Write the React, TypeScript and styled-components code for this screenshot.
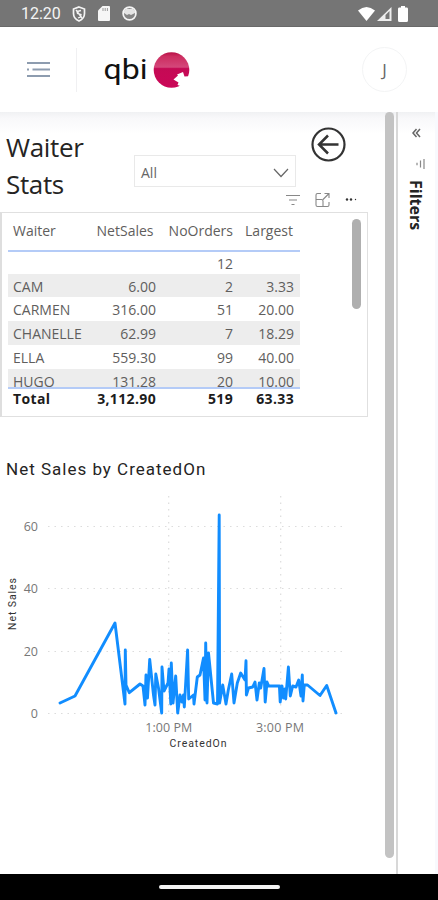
import React from 'react';
import styled, { createGlobalStyle } from 'styled-components';

const Global = createGlobalStyle`
  * { box-sizing: border-box; }
  body { margin: 0; background: #fff; font-family: "Open Sans", "Noto Sans", sans-serif; }
`;

const Screen = styled.div`
  width: 438px;
  height: 900px;
  display: flex;
  flex-direction: column;
  overflow: hidden;
  background: #fff;
`;

const StatusBar = styled.div`
  height: 27px;
  flex: none;
  display: flex;
  align-items: center;
  justify-content: space-between;
  padding: 1px 29px 0 21px;
  background: #757575;
  border-bottom: 1px solid #696969;
  color: #f4f4f4;
`;

const StatusGroup = styled.div<{ $gap: number }>`
  display: flex;
  align-items: center;
  gap: ${p => p.$gap}px;
`;

const Clock = styled.span`
  width: 40px;
  margin-right: -1px;
  padding-top: 1px;
  font: 400 16px/20px Roboto, sans-serif;
`;

const Header = styled.header`
  height: 85px;
  flex: none;
  display: flex;
  align-items: center;
  padding: 0 31px 0 27px;
`;

const HeaderRule = styled.div`
  width: 1px;
  height: 44px;
  margin-left: 26px;
  background: #f0f0f2;
`;

const Logo = styled.svg`
  margin-left: 27px;
`;

const Avatar = styled.div`
  width: 45px;
  height: 45px;
  margin-left: auto;
  border: 1px solid #f3f4f5;
  border-radius: 50%;
  display: flex;
  align-items: center;
  justify-content: center;
  font-size: 17px;
  color: #666;
`;

const Body = styled.div`
  flex: 1;
  min-height: 0;
  display: flex;
  background: linear-gradient(#f0f1f3 0, #f8f8fa 6px, #fff 22px);
`;

const Report = styled.main`
  width: 385px;
  flex: none;
  display: flex;
  flex-direction: column;
`;

const PageScroll = styled.div`
  width: 9px;
  height: 746px;
  border-radius: 5px;
  background: #c3c3c3;
`;

const FilterPane = styled.aside`
  width: 42px;
  margin-left: 2px;
  border-left: 2px solid #d8d8d8;
  border-right: 3px solid #f8f9fd;
  display: flex;
  flex-direction: column;
  align-items: center;
  padding-top: 16px;
`;

const FilterGlyph = styled.svg`
  margin: 21px 0 0 6px;
`;

const FilterLabel = styled.div`
  margin: 11px 0 0 -1px;
  writing-mode: vertical-rl;
  font-size: 16px;
  line-height: 20px;
  font-weight: 700;
  color: #242424;
`;

const TopRow = styled.div`
  height: 76px;
  display: flex;
`;

const Title = styled.h1`
  width: 127px;
  margin: 0;
  padding: 17px 30px 0 6px;
  font-size: 26px;
  line-height: 36.5px;
  font-weight: 400;
  letter-spacing: -0.35px;
  color: #252423;
`;

const Select = styled.div`
  width: 162px;
  height: 32px;
  margin: 43px 0 0 7px;
  padding: 3px 6px 0 6px;
  border: 1px solid #e9e9e9;
  display: flex;
  align-items: center;
  justify-content: space-between;
  font-size: 14px;
  color: #666;
`;

const BackButton = styled.svg`
  margin: 15px 0 0 15px;
`;

const Tools = styled.div`
  height: 24px;
  display: flex;
  justify-content: flex-end;
  align-items: center;
  gap: 14px;
  padding: 0 27px 0 0;
`;

const TableVisual = styled.section`
  width: 368px;
  height: 205px;
  border: 1px solid #e0e0e0;
  border-left: 2px solid #dedede;
  display: flex;
  justify-content: space-between;
  padding: 0 6px 0 6px;
`;

const Grid = styled.div`
  width: 292px;
  font-size: 14px;
`;

const Row = styled.div<{ $kind: 'head' | 'plain' | 'shade' | 'total' }>`
  display: grid;
  grid-template-columns: 67px 76px 77px 61px;
  padding-left: 5px;
  text-align: right;
  height: ${p => (p.$kind === 'head' ? 39 : p.$kind === 'total' ? 25 : 23.8)}px;
  line-height: ${p => (p.$kind === 'head' ? 35 : p.$kind === 'total' ? 20 : 25)}px;
  border-bottom: ${p => (p.$kind === 'head' ? '2px solid #b4cbf7' : 'none')};
  background: ${p => (p.$kind === 'shade' ? '#ededed' : 'transparent')};
  color: ${p => (p.$kind === 'total' ? '#1c1c1c' : '#5f5e5d')};
  font-weight: ${p => (p.$kind === 'total' ? 700 : 400)};
  letter-spacing: ${p => (p.$kind === 'total' ? 0.35 : 0)}px;
  white-space: nowrap;
  & > :first-child { text-align: left; }
`;

const HeadCell = styled.span<{ $shift?: number }>`
  padding-right: ${p => p.$shift ?? 0}px;
`;

const Rows = styled.div`
  height: 137px;
  overflow: hidden;
  border-bottom: 2px solid #b4cbf7;
  & > :first-child { height: 21.5px; line-height: 23px; }
`;

const TableScroll = styled.div`
  width: 9px;
  height: 90px;
  margin-top: 6px;
  border-radius: 5px;
  background: #afafaf;
`;

const ChartTitle = styled.h2`
  height: 24px;
  margin: 40px 0 0 6px;
  font: 400 17px/24px Roboto, sans-serif;
  letter-spacing: 1px;
  color: #252423;
`;

const NavBar = styled.footer`
  height: 26px;
  flex: none;
  display: flex;
  justify-content: center;
  padding-top: 11px;
  background: #000;
`;

const HomeHandle = styled.div`
  width: 121px;
  height: 4px;
  border-radius: 3px;
  background: #f3f3f3;
`;

type Entry = [string, string, string, string];

const entries: Entry[] = [
  ['', '', '12', ''],
  ['CAM', '6.00', '2', '3.33'],
  ['CARMEN', '316.00', '51', '20.00'],
  ['CHANELLE', '62.99', '7', '18.29'],
  ['ELLA', '559.30', '99', '40.00'],
  ['HUGO', '131.28', '20', '10.00'],
];

const series: [number, number][] = [
  [60, 703], [75, 696], [115, 623], [125, 704], [125.3, 650], [126, 685], [129.3, 692.7], [140, 684], [143, 686],
  [145, 705], [146, 675], [147.5, 698], [149.7, 659.5], [153.5, 695], [155, 705], [155.8, 674], [158.5, 688],
  [161.7, 713], [162, 667], [164, 691], [168, 683], [169, 669], [170.8, 704], [171.3, 663], [173, 703],
  [175.7, 676], [177.7, 713], [180, 695], [182, 702], [183.5, 695], [184.3, 707], [187.6, 650], [188.7, 699],
  [193.5, 695], [194, 704], [197.3, 677], [200, 675], [203.5, 658], [205, 700], [205.7, 643], [207, 703],
  [208.5, 653], [210.5, 673], [213.5, 703], [217.5, 704], [219.2, 515], [219.6, 703], [222.7, 685], [226, 704],
  [228.3, 690], [231.7, 674], [234, 703], [237.3, 683], [240.7, 673], [245, 680], [246, 660.7], [246.4, 695],
  [248.5, 688], [252.7, 687], [255, 682], [257, 700], [259.3, 683], [260.7, 688], [264, 668.5], [265.2, 702],
  [267, 682], [268.7, 686], [279.4, 686], [280.2, 702], [282, 686], [283.5, 698], [285, 689], [285.7, 699],
  [288.4, 667], [290.3, 696], [292.7, 686], [296, 687], [298.7, 680], [301, 696], [302.3, 675], [303, 701],
  [304.3, 685], [307.5, 685], [320, 695.5], [326.7, 685.5], [336, 713],
];

const ticks = [
  { label: '60', y: 526.5 },
  { label: '40', y: 588.5 },
  { label: '20', y: 651.5 },
  { label: '0', y: 713.5 },
];

function Chart() {
  return (
    <svg width="350" height="272" viewBox="0 481 350 272" fontSize="12.5" fill="#777">
      <g stroke="#dcdcdc" strokeWidth="1.2" strokeDasharray="1.5 5">
        {ticks.map(t => <line key={t.y} x1="48" x2="343" y1={t.y} y2={t.y} />)}
        <line x1="168.7" x2="168.7" y1="496" y2="713" />
        <line x1="280.7" x2="280.7" y1="496" y2="713" />
      </g>
      {ticks.map(t => (
        <text key={t.label} x="38" y={t.y + 4.5} textAnchor="end">{t.label}</text>
      ))}
      <text x="168.7" y="731.5" textAnchor="middle" textLength="47">1:00 PM</text>
      <text x="280" y="731.5" textAnchor="middle" textLength="48">3:00 PM</text>
      <g fontFamily="Roboto, sans-serif" fontSize="10.5" fill="#333">
        <text x="169.5" y="746.5" textLength="57">CreatedOn</text>
        <text transform="translate(16 630) rotate(-90)" textLength="52">Net Sales</text>
      </g>
      <polyline
        points={series.map(p => p.join(',')).join(' ')}
        fill="none" stroke="#118dff" strokeWidth="2.9" strokeLinejoin="round" strokeLinecap="round"
      />
    </svg>
  );
}

function Brand() {
  return (
    <Logo width="88" height="44" viewBox="0 0 88 44">
      <defs>
        <linearGradient id="ball" x1="0" y1="0" x2="0" y2="1">
          <stop offset="0" stopColor="#b81046" />
          <stop offset="0.12" stopColor="#cc2d60" />
          <stop offset="0.42" stopColor="#d4477a" />
          <stop offset="0.46" stopColor="#c40a54" />
          <stop offset="1" stopColor="#cb0758" />
        </linearGradient>
      </defs>
      <text
        x="-0.5" y="30.5" fontFamily="Roboto, sans-serif" fontSize="27" fill="#111"
        textLength="44" lengthAdjust="spacingAndGlyphs"
      >
        qbi
      </text>
      <circle cx="67.500" cy="22" r="17.8" fill="url(#ball)" />
      <path d="M69.500 31.500 L74 27.500 L73 26.500 L79 24 L80.500 28.500 L88 28 L82 40 L73.500 37 L74.500 34.500 Z" fill="#fff" />
    </Logo>
  );
}

export default function App() {
  return (
    <Screen>
      <Global />
      <StatusBar>
        <StatusGroup $gap={12}>
          <Clock>12:20</Clock>
          <svg width="14" height="16" viewBox="0 0 14 16" fill="none" stroke="#f4f4f4" strokeWidth="1.7">
            <path d="M7 1 L12.5 3 V7.5 C12.5 11 10 13.7 7 15 C4 13.7 1.5 11 1.5 7.5 V3 Z" />
            <path d="M9 4.5 L5 5.5 L5.5 7.5 L9 8.5 L8.5 11 L6 12 M4 4 L10 12" strokeWidth="1.3" />
          </svg>
          <svg width="12" height="15" viewBox="0 0 12 15" fill="#f6f6f6">
            <path d="M4.5 0 H11 Q12 0 12 1 V14 Q12 15 11 15 H1 Q0 15 0 14 V4.5 Z" />
            <path d="M5 2 V5 M7.2 2 V5 M9.4 2 V5" stroke="#999" />
          </svg>
          <svg width="15" height="15" viewBox="0 0 15 15">
            <circle cx="7.5" cy="7.5" r="6.4" fill="#858585" stroke="#f4f4f4" strokeWidth="1.7" />
            <path d="M2 5 L4 3 H11 L13 5 V7 L9 9 L7 8 L5 9 L2 7 Z" fill="#e4e4e4" />
          </svg>
        </StatusGroup>
        <StatusGroup $gap={2}>
          <svg width="17" height="14" viewBox="0 0 17 14"><path d="M0 3.6 Q8.5 -3.4 17 3.6 L8.5 14 Z" fill="#fff" /></svg>
          <svg width="15" height="14" viewBox="0 0 15 14">
            <path d="M0 14 L14.5 0 V14 Z" fill="#eee" />
            <path d="M8.5 12 V8 L12.5 4 V12 Z" fill="#777" />
          </svg>
          <svg width="15" height="16" viewBox="0 0 15 16">
            <path d="M7 0 H11 V1.5 H13 Q14 1.5 14 3 V14.5 Q14 16 12.5 16 H5.5 Q4 16 4 14.5 V3 Q4 1.5 5 1.5 H7 Z" fill="#fff" />
          </svg>
        </StatusGroup>
      </StatusBar>
      <Header>
        <svg width="23" height="18" viewBox="0 0 23 18" stroke="#8d9caf" strokeWidth="2.2">
          <path d="M0 2 H23 M0 8.5 H2 M5.5 8.5 H23 M0 15 H23" />
        </svg>
        <HeaderRule />
        <Brand />
        <Avatar>J</Avatar>
      </Header>
      <Body>
        <Report>
          <TopRow>
            <Title>Waiter Stats</Title>
            <Select>
              All
              <svg width="16" height="10" viewBox="0 0 16 10" fill="none" stroke="#666" strokeWidth="1.2"><path d="M1 1 L8 8.5 L15 1" /></svg>
            </Select>
            <BackButton width="36" height="36" viewBox="0 0 36 36" fill="none" stroke="#333" strokeWidth="2.2">
              <circle cx="17.5" cy="17.5" r="16" />
              <path d="M27.5 17.5 H8 M17 8.5 L8 17.5 L17 26.5" strokeWidth="2.5" />
            </BackButton>
          </TopRow>
          <Tools>
            <svg width="14" height="12" viewBox="0 0 14 12" stroke="#888" strokeWidth="1.2"><path d="M0 1.5 H14 M3 6 H11 M5.5 10.5 H8.5" /></svg>
            <svg width="17" height="16" viewBox="0 0 17 16" fill="none" stroke="#888" strokeWidth="1.1">
              <path d="M7 1.5 H3.5 Q2 1.5 2 3 V13 Q2 14.5 3.5 14.5 H13.5 Q15 14.5 15 13 V10 M2 7.5 H7.5 Q9 7.5 9 9 V14.5 M9 7.5 L15 1.5 M10.5 1.5 H15 V6" />
            </svg>
            <svg width="13" height="4" viewBox="0 0 13 4" fill="#333">
              <circle cx="2" cy="1.5" r="1.2" /><circle cx="6" cy="1.5" r="1.2" /><circle cx="10.5" cy="1.5" r="0.7" />
            </svg>
          </Tools>
          <TableVisual>
            <Grid>
              <Row $kind="head">
                <HeadCell>Waiter</HeadCell>
                <HeadCell $shift={2.5}>NetSales</HeadCell>
                <HeadCell>NoOrders</HeadCell>
                <HeadCell $shift={1}>Largest</HeadCell>
              </Row>
              <Rows>
                {entries.map((entry, i) => (
                  <Row key={i} $kind={i % 2 ? 'shade' : 'plain'}>
                    {entry.map((value, j) => <span key={j}>{value}</span>)}
                  </Row>
                ))}
              </Rows>
              <Row $kind="total">
                <span>Total</span><span>3,112.90</span><span>519</span><span>63.33</span>
              </Row>
            </Grid>
            <TableScroll />
          </TableVisual>
          <ChartTitle>Net Sales by CreatedOn</ChartTitle>
          <Chart />
        </Report>
        <PageScroll />
        <FilterPane>
          <svg width="9" height="10" viewBox="0 0 9 10" fill="none" stroke="#666" strokeWidth="1.5"><path d="M4.500 1 L1 5 L4.500 9 M8 1 L4.500 5 L8 9" /></svg>
          <FilterGlyph width="11" height="10" viewBox="0 0 11 10" stroke="#888" strokeWidth="1.2">
            <path d="M10 0 V10 M6.5 1.5 V8.5 M3 3.8 V6.2" />
          </FilterGlyph>
          <FilterLabel>Filters</FilterLabel>
        </FilterPane>
      </Body>
      <NavBar><HomeHandle /></NavBar>
    </Screen>
  );
}
